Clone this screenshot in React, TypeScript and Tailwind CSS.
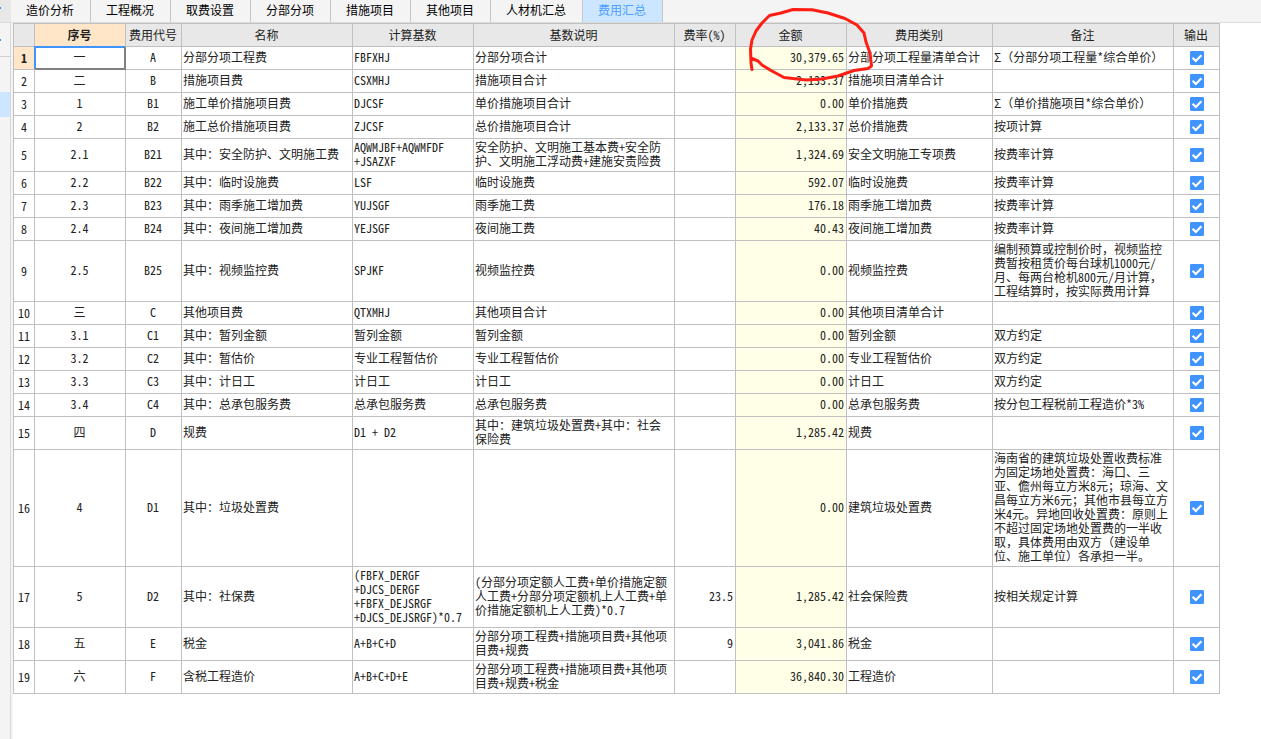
import { Fragment } from "react";

type Row = {
  seq: string;
  code: string;
  name: string;
  base?: string;
  desc?: string;
  rate?: string;
  amount: string;
  category: string;
  note?: string;
};

const tabs = ["造价分析", "工程概况", "取费设置", "分部分项", "措施项目", "其他项目", "人材机汇总", "费用汇总"];

const columns = [
  { title: "", width: "w-[21px]" },
  { title: "序号", width: "w-[91px]" },
  { title: "费用代号", width: "w-[56px]" },
  { title: "名称", width: "w-[171px]" },
  { title: "计算基数", width: "w-[121px]" },
  { title: "基数说明", width: "w-[201px]" },
  { title: "费率(%)", width: "w-[61px]" },
  { title: "金额", width: "w-[111px]" },
  { title: "费用类别", width: "w-[146px]" },
  { title: "备注", width: "w-[181px]" },
  { title: "输出", width: "w-[46px]" },
];

const rows: Row[] = [
  { seq: "一", code: "A", name: "分部分项工程费", base: "FBFXHJ", desc: "分部分项合计", amount: "30,379.65", category: "分部分项工程量清单合计", note: "Σ（分部分项工程量*综合单价）" },
  { seq: "二", code: "B", name: "措施项目费", base: "CSXMHJ", desc: "措施项目合计", amount: "2,133.37", category: "措施项目清单合计" },
  { seq: "1", code: "B1", name: "施工单价措施项目费", base: "DJCSF", desc: "单价措施项目合计", amount: "0.00", category: "单价措施费", note: "Σ（单价措施项目*综合单价）" },
  { seq: "2", code: "B2", name: "施工总价措施项目费", base: "ZJCSF", desc: "总价措施项目合计", amount: "2,133.37", category: "总价措施费", note: "按项计算" },
  { seq: "2.1", code: "B21", name: "其中：安全防护、文明施工费", base: "AQWMJBF+AQWMFDF\n+JSAZXF", desc: "安全防护、文明施工基本费+安全防\n护、文明施工浮动费+建施安责险费", amount: "1,324.69", category: "安全文明施工专项费", note: "按费率计算" },
  { seq: "2.2", code: "B22", name: "其中：临时设施费", base: "LSF", desc: "临时设施费", amount: "592.07", category: "临时设施费", note: "按费率计算" },
  { seq: "2.3", code: "B23", name: "其中：雨季施工增加费", base: "YUJSGF", desc: "雨季施工费", amount: "176.18", category: "雨季施工增加费", note: "按费率计算" },
  { seq: "2.4", code: "B24", name: "其中：夜间施工增加费", base: "YEJSGF", desc: "夜间施工费", amount: "40.43", category: "夜间施工增加费", note: "按费率计算" },
  { seq: "2.5", code: "B25", name: "其中：视频监控费", base: "SPJKF", desc: "视频监控费", amount: "0.00", category: "视频监控费", note: "编制预算或控制价时，视频监控\n费暂按租赁价每台球机1000元/\n月、每两台枪机800元/月计算，\n工程结算时，按实际费用计算" },
  { seq: "三", code: "C", name: "其他项目费", base: "QTXMHJ", desc: "其他项目合计", amount: "0.00", category: "其他项目清单合计" },
  { seq: "3.1", code: "C1", name: "其中：暂列金额", base: "暂列金额", desc: "暂列金额", amount: "0.00", category: "暂列金额", note: "双方约定" },
  { seq: "3.2", code: "C2", name: "其中：暂估价", base: "专业工程暂估价", desc: "专业工程暂估价", amount: "0.00", category: "专业工程暂估价", note: "双方约定" },
  { seq: "3.3", code: "C3", name: "其中：计日工", base: "计日工", desc: "计日工", amount: "0.00", category: "计日工", note: "双方约定" },
  { seq: "3.4", code: "C4", name: "其中：总承包服务费", base: "总承包服务费", desc: "总承包服务费", amount: "0.00", category: "总承包服务费", note: "按分包工程税前工程造价*3%" },
  { seq: "四", code: "D", name: "规费", base: "D1 + D2", desc: "其中：建筑垃圾处置费+其中：社会\n保险费", amount: "1,285.42", category: "规费" },
  { seq: "4", code: "D1", name: "其中：垃圾处置费", amount: "0.00", category: "建筑垃圾处置费", note: "海南省的建筑垃圾处置收费标准\n为固定场地处置费：海口、三\n亚、儋州每立方米8元；琼海、文\n昌每立方米6元；其他市县每立方\n米4元。异地回收处置费：原则上\n不超过固定场地处置费的一半收\n取，具体费用由双方（建设单\n位、施工单位）各承担一半。" },
  { seq: "5", code: "D2", name: "其中：社保费", base: "(FBFX_DERGF\n+DJCS_DERGF\n+FBFX_DEJSRGF\n+DJCS_DEJSRGF)*0.7", desc: "(分部分项定额人工费+单价措施定额\n人工费+分部分项定额机上人工费+单\n价措施定额机上人工费)*0.7", rate: "23.5", amount: "1,285.42", category: "社会保险费", note: "按相关规定计算" },
  { seq: "五", code: "E", name: "税金", base: "A+B+C+D", desc: "分部分项工程费+措施项目费+其他项\n目费+规费", rate: "9", amount: "3,041.86", category: "税金" },
  { seq: "六", code: "F", name: "含税工程造价", base: "A+B+C+D+E", desc: "分部分项工程费+措施项目费+其他项\n目费+规费+税金", amount: "36,840.30", category: "工程造价" },
];

/** Sets ASCII runs in half-width forms and the sum sign in its full-width form. */
function Mixed({ text = "" }: { text?: string }) {
  return (
    <>
      {text.split(/([\x20-\x7e]+|Σ)/).map((part, i) =>
        i % 2 ? (
          <span key={i} className={part === "Σ" ? "[font-feature-settings:'fwid']" : "[font-feature-settings:'hwid']"}>
            {part}
          </span>
        ) : (
          <Fragment key={i}>{part}</Fragment>
        ),
      )}
    </>
  );
}

const cell = "border-r border-b border-[#c0c0c0] pt-px pr-[2px] pb-[3px] pl-px whitespace-pre-line";

function FeeRow({ row, index }: { row: Row; index: number }) {
  const current = index === 0;
  return (
    <tr className="h-[23px]">
      <th scope="row" className={`border-r border-b border-[#c0c0c0] ${current ? "bg-[#ffe6c8] font-bold" : "font-normal"}`}>
        <Mixed text={String(index + 1)} />
      </th>
      <td
        className={
          current
            ? "border-r-2 border-b-2 border-r-[#808080] border-b-[#808080] pb-px text-center shadow-[-1px_-1px_0_#4094ff,inset_1px_1px_0_#4094ff]"
            : `${cell} text-center`
        }
      >
        <Mixed text={row.seq} />
      </td>
      <td className={`${cell} text-center`}><Mixed text={row.code} /></td>
      <td className={cell}><Mixed text={row.name} /></td>
      <td className={cell}><Mixed text={row.base} /></td>
      <td className={cell}><Mixed text={row.desc} /></td>
      <td className={`${cell} text-right`}><Mixed text={row.rate} /></td>
      <td className={`${cell} bg-[#ffffe8] text-right`}><Mixed text={row.amount} /></td>
      <td className={cell}><Mixed text={row.category} /></td>
      <td className={cell}><Mixed text={row.note} /></td>
      <td className="border-r border-b border-[#c0c0c0] pb-px">
        <label className="relative mx-auto block size-[14px]">
          <input
            type="checkbox"
            defaultChecked
            aria-label={`输出 ${row.name}`}
            className="peer block size-[14px] appearance-none rounded-[1px] border border-[#4094ff] bg-white checked:bg-[#4094ff]"
          />
          <svg viewBox="0 0 14 14" className="pointer-events-none absolute inset-0 hidden size-[14px] peer-checked:block" aria-hidden="true">
            <path d="M2.6 6.8 L5.8 10 L11.4 4.2" fill="none" stroke="#fff" strokeWidth="2.2" />
          </svg>
        </label>
      </td>
    </tr>
  );
}

export default function App() {
  return (
    <div className="flex min-h-screen flex-col bg-white font-['Noto_Sans_CJK_SC',sans-serif] text-[12px] leading-[14px] text-[#222]">
      <header className="flex h-[23px] border-b border-[#dcdcdc] bg-[#f4f4f4]">
        <div className="w-[11px] shrink-0 bg-[#e8e8e8] pt-[7px]">
          <div className="h-[2px] w-px bg-[#4094ff]" />
        </div>
        <nav className="flex" aria-label="工程页签">
          {tabs.map((tab, i) => {
            const active = i === tabs.length - 1;
            return (
              <button
                key={tab}
                type="button"
                aria-current={active ? "page" : undefined}
                className={`border-r border-[#c8c8c8] pr-[16px] pb-[2px] pl-[15px] text-[12px] ${active ? "bg-[#cce6ff] text-[#4da0ff]" : "text-black"}`}
              >
                {tab}
              </button>
            );
          })}
        </nav>
      </header>
      <div className="flex grow">
        <aside className="w-[11px] shrink-0 border-r border-[#d8d8d8] bg-[#f4f4f4]">
          <div className="flex h-[34px] items-center border-b border-[#d0d0d0]">
            <div className="h-[2px] w-px bg-[#4094ff]" />
          </div>
          <div className="mt-[35px] h-[25px] bg-[#cce6ff]" />
        </aside>
        <main className="relative grow border-l-2 border-[#f4f4f4] pr-[41px]">
          <table className="w-full min-w-[1207px] table-fixed border-separate border-spacing-0 border-t border-l border-[#c0c0c0]">
            <colgroup>
              {columns.map((c) => (
                <col key={c.title} className={c.width} />
              ))}
            </colgroup>
            <thead>
              <tr className="h-[23px]">
                {columns.map((c, i) => (
                  <th
                    key={c.title}
                    scope="col"
                    className={`border-r border-b border-[#c0c0c0] pr-px whitespace-nowrap ${i === 1 ? "bg-[#ffe6c8] font-bold" : "bg-[#e8e8e8] font-normal"}`}
                  >
                    <Mixed text={c.title} />
                  </th>
                ))}
              </tr>
            </thead>
            <tbody>
              {rows.map((row, i) => (
                <FeeRow key={row.code} row={row} index={i} />
              ))}
            </tbody>
          </table>
          <svg
            viewBox="745 5 130 80"
            className="pointer-events-none absolute -top-[18px] left-[732px] h-[80px] w-[130px]"
            fill="none"
            stroke="#ff1e14"
            strokeWidth="3"
            strokeLinecap="round"
            strokeLinejoin="round"
            aria-hidden="true"
          >
            <path d="M752 69.5 L751 63 L750.5 49 L752 40 L756 31 L762 23 L769.5 15.5 L781 13 L793 9.5 L812 9.8 L828 13 L845 18.5 L857 25 L864 33 L866 42 L870 53 L871.5 66 L868 68.5 L854 70.5 L838 76 L822 79 L806 80 L784 77.5 L771 70.5 L762 65 L758 61 L751 58" />
          </svg>
        </main>
      </div>
    </div>
  );
}
